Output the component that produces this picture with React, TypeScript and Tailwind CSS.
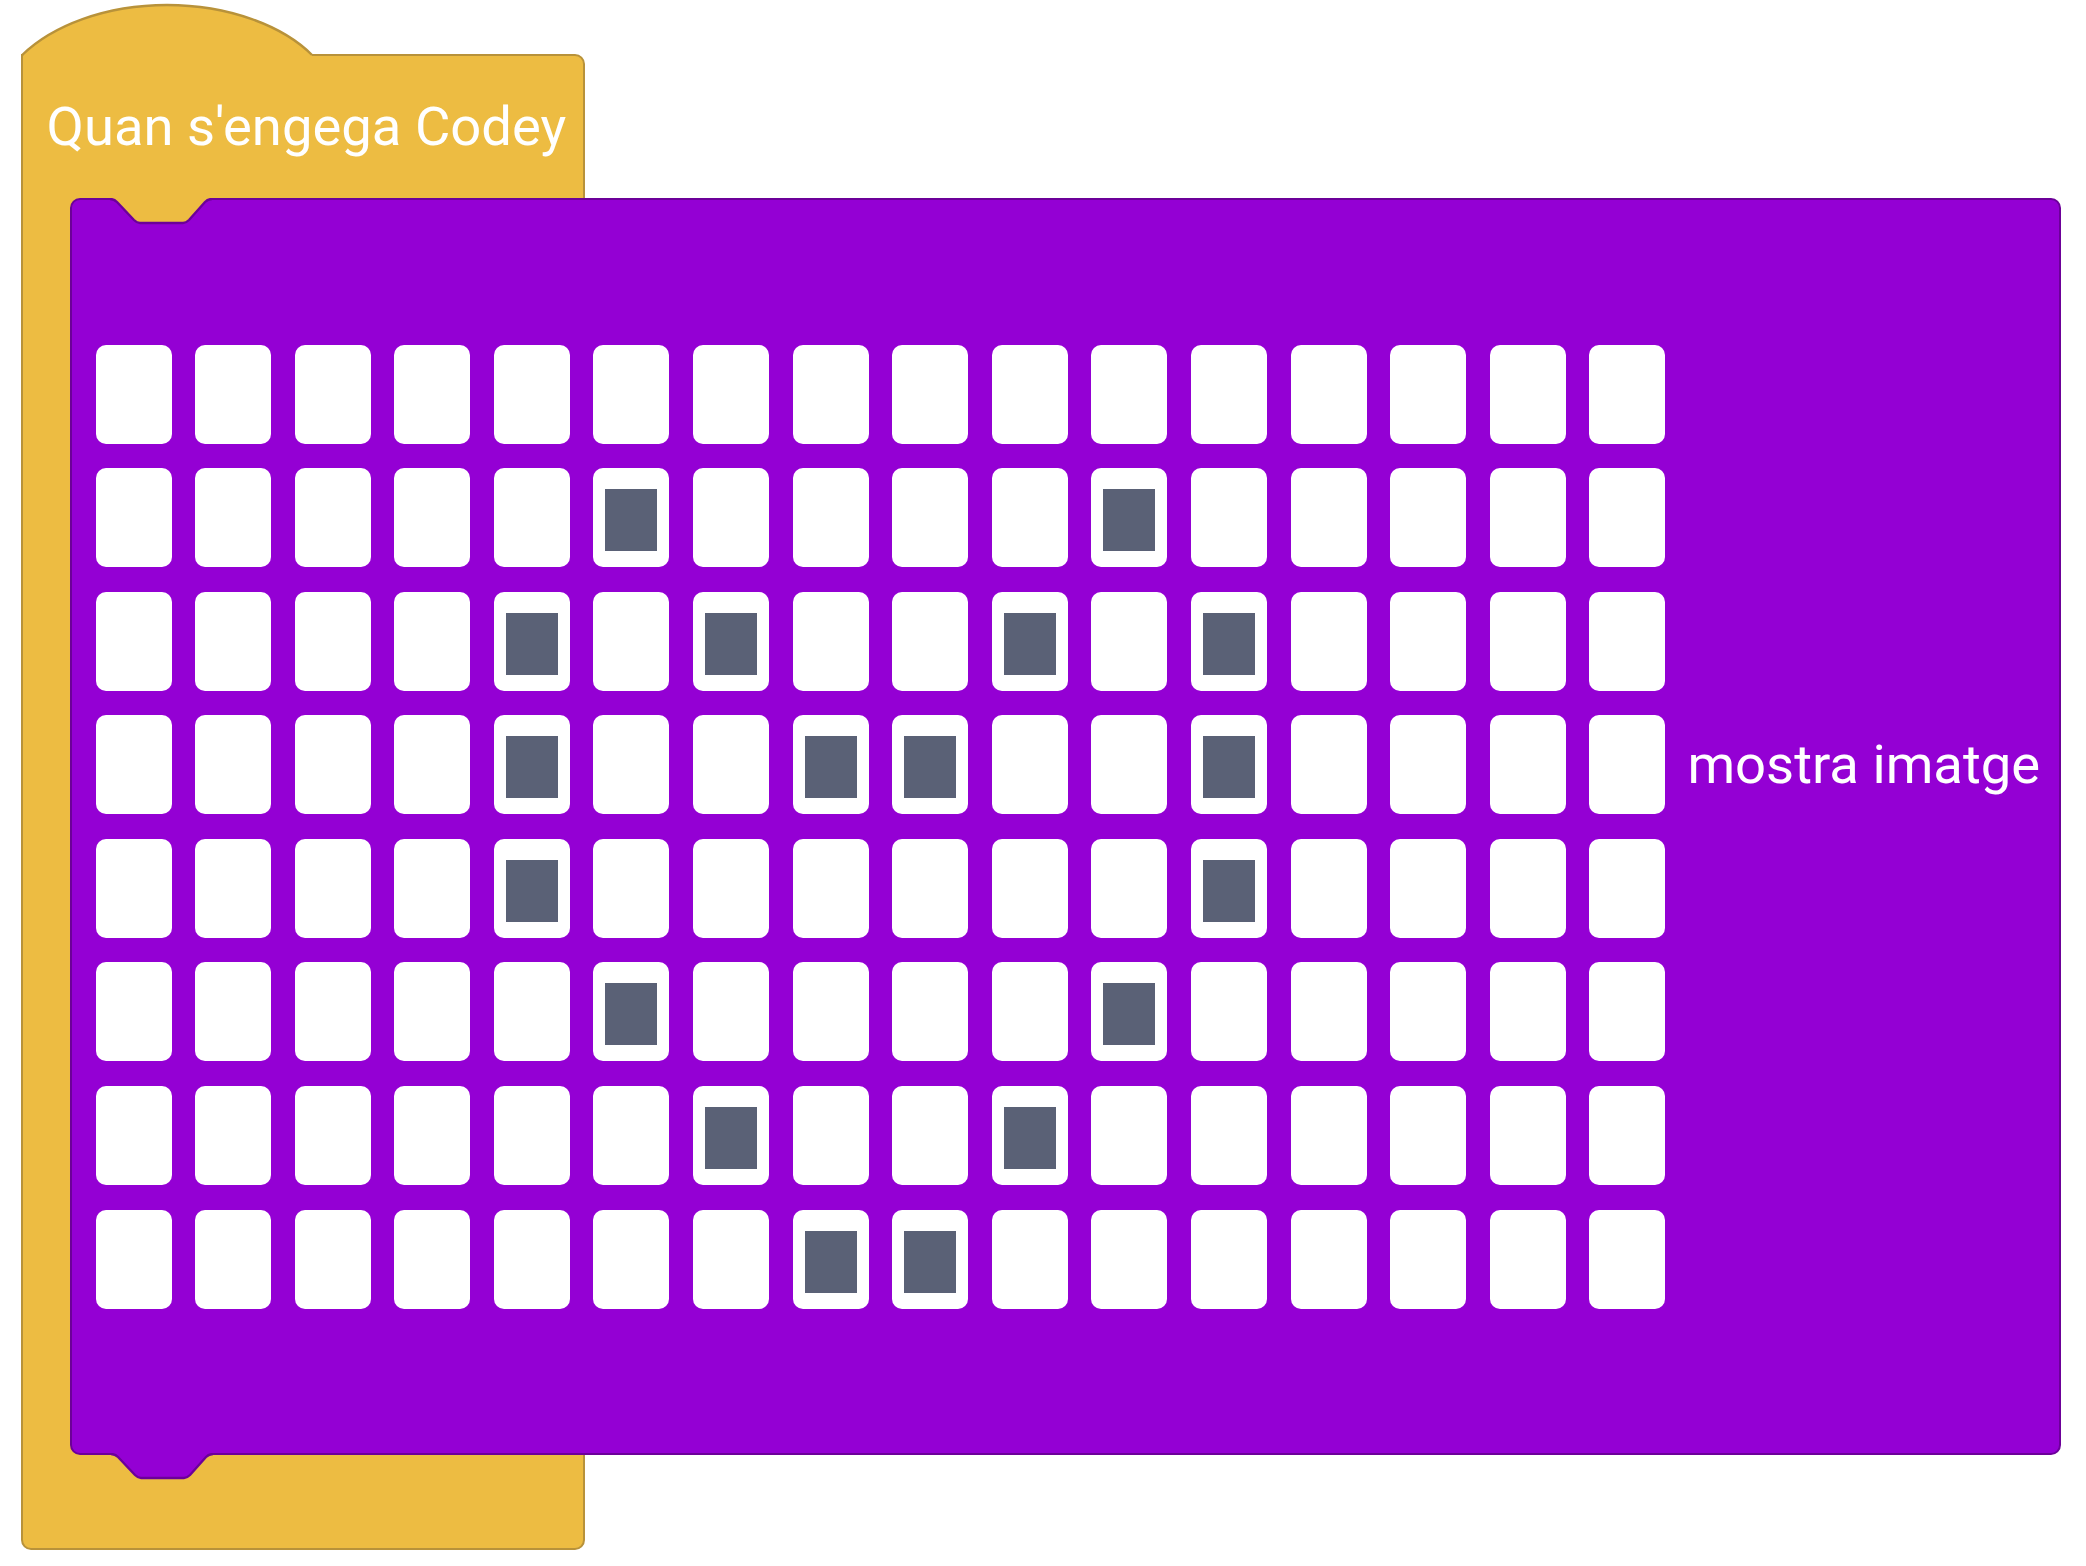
const ON: Record<number, number[]> = {
  1: [5, 10],
  2: [4, 6, 9, 11],
  3: [4, 7, 8, 11],
  4: [4, 11],
  5: [5, 10],
  6: [6, 9],
  7: [7, 8],
};

const notch =
  "M2 1 C5 1 7 2 9 4 L26 22 C28 24 29.5 25 32 25 L75 25 C77.5 25 79 24 81 22 L97 4 C99 2 101 1 104 1";

function Cell({ on }: { on: boolean }) {
  return (
    <div className="w-[76px] h-[99px] rounded-[10px] bg-white pt-[21px] pl-[12px]">
      {on && <div className="w-[52px] h-[62px] bg-[#5a6176]" />}
    </div>
  );
}

export default function App() {
  const rows = Array.from({ length: 8 }, (_, r) => r);
  const cols = Array.from({ length: 16 }, (_, c) => c);
  return (
    <div className="w-[2086px] h-[1566px] bg-white pl-[21px] pt-[54px] font-['Roboto',sans-serif] text-white">
      <div className="relative w-[564px] h-[1496px] bg-[#edbc42] border-2 border-[#b8923a] rounded-tr-[10px] rounded-br-[10px] rounded-bl-[10px]">
        {/* hat */}
        <svg className="absolute left-[-2px] top-[-56px]" width="300" height="60">
          <path d="M2.2 54.5 C31 26 84 5 146 5 C208 5 262 26 291 55 L291 57.5 L2.2 57.5 Z" fill="#edbc42" />
          <path d="M1.2 55 C31 26 84 5 146 5 C208 5 262 26 291 55" fill="none" stroke="#b8923a" strokeWidth="2.4" />
        </svg>

        <div className="h-[142px] pt-[39px] pl-[23.5px] text-[54.4px] leading-[64px] whitespace-nowrap">
          Quan s'engega Codey
        </div>

        <div className="relative ml-[47px] w-[1991px] h-[1257px] bg-[#9400d4] border-2 border-[#6c0099] rounded-[10px]">
          <svg className="absolute left-[36px] top-[-2px]" width="108" height="28">
            <path d={notch + " L104 0 L2 0 Z"} fill="#edbc42" />
            <path d={notch} fill="none" stroke="#6c0099" strokeWidth="2.4" />
          </svg>

          <div className="flex items-start pl-[23.5px] pt-[144.5px]">
            <div className="grid grid-cols-[repeat(16,76px)] gap-x-[23.6px] gap-y-[24.6px]">
              {rows.map((r) =>
                cols.map((c) => <Cell key={r + "-" + c} on={(ON[r] || []).includes(c)} />)
              )}
            </div>
            <div className="ml-[22px] mt-[388px] text-[54.4px] leading-[64px] whitespace-nowrap">
              mostra imatge
            </div>
          </div>

          <svg className="absolute left-[37px] top-full" width="108" height="28">
            <path d={notch + " L104 0 L2 0 Z"} fill="#9400d4" />
            <path d={notch} fill="none" stroke="#6c0099" strokeWidth="2.4" />
          </svg>
        </div>

        <div className="h-[93px]" />
      </div>
    </div>
  );
}
